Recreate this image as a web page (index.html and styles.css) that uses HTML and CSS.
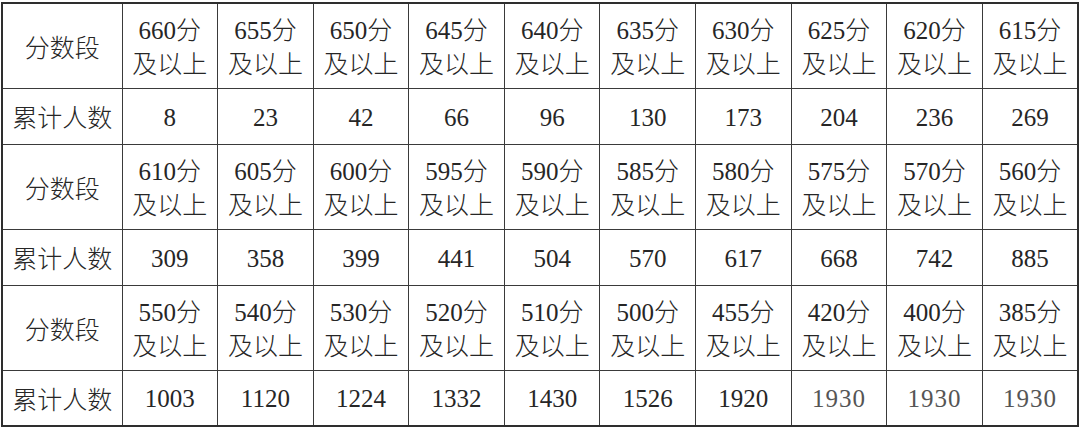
FILE: index.html
```html
<!DOCTYPE html>
<html lang="zh">
<head>
<meta charset="utf-8">
<title>分数段</title>
<link rel="stylesheet" href="styles.css">
</head>
<body>
<table class="score-table">
  <colgroup>
    <col class="col-head">
    <col class="col-data"><col class="col-data"><col class="col-data"><col class="col-data"><col class="col-data">
    <col class="col-data"><col class="col-data"><col class="col-data"><col class="col-data"><col class="col-data">
  </colgroup>
  <tbody>
    <tr class="row-score">
      <th>分数段</th>
      <td>660分<br>及以上</td><td>655分<br>及以上</td><td>650分<br>及以上</td><td>645分<br>及以上</td><td>640分<br>及以上</td>
      <td>635分<br>及以上</td><td>630分<br>及以上</td><td>625分<br>及以上</td><td>620分<br>及以上</td><td>615分<br>及以上</td>
    </tr>
    <tr class="row-count">
      <th>累计人数</th>
      <td>8</td><td>23</td><td>42</td><td>66</td><td>96</td><td>130</td><td>173</td><td>204</td><td>236</td><td>269</td>
    </tr>
    <tr class="row-score">
      <th>分数段</th>
      <td>610分<br>及以上</td><td>605分<br>及以上</td><td>600分<br>及以上</td><td>595分<br>及以上</td><td>590分<br>及以上</td>
      <td>585分<br>及以上</td><td>580分<br>及以上</td><td>575分<br>及以上</td><td>570分<br>及以上</td><td>560分<br>及以上</td>
    </tr>
    <tr class="row-count">
      <th>累计人数</th>
      <td>309</td><td>358</td><td>399</td><td>441</td><td>504</td><td>570</td><td>617</td><td>668</td><td>742</td><td>885</td>
    </tr>
    <tr class="row-score">
      <th>分数段</th>
      <td>550分<br>及以上</td><td>540分<br>及以上</td><td>530分<br>及以上</td><td>520分<br>及以上</td><td>510分<br>及以上</td>
      <td>500分<br>及以上</td><td>455分<br>及以上</td><td>420分<br>及以上</td><td>400分<br>及以上</td><td>385分<br>及以上</td>
    </tr>
    <tr class="row-count">
      <th>累计人数</th>
      <td>1003</td><td>1120</td><td>1224</td><td>1332</td><td>1430</td><td>1526</td><td>1920</td>
      <td class="faded">1930</td><td class="faded">1930</td><td class="faded">1930</td>
    </tr>
  </tbody>
</table>
</body>
</html>
```

FILE: styles.css
```css
html, body {
  margin: 0;
  padding: 0;
  background: #ffffff;
}

body {
  padding: 2px 0 0 1px;
}

.score-table {
  border-collapse: collapse;
  table-layout: fixed;
  width: 1077px;
  border: 2px solid #2e2e2e;
  font-family: "Liberation Serif", "Noto Sans CJK SC", serif;
  font-size: 25px;
  font-weight: 300;
  color: #262626;
}

.col-head {
  width: 120px;
}

.col-data {
  width: 95.6px;
}

.score-table th,
.score-table td {
  border: 1px solid #3a3a3a;
  text-align: center;
  vertical-align: middle;
  padding: 0;
  font-weight: 300;
  white-space: nowrap;
  overflow: hidden;
}

.row-score td {
  line-height: 34px;
  padding-top: 5px;
}

.row-count td {
  padding-top: 3px;
}

.row-score {
  height: 85px;
}

.row-count {
  height: 56px;
}

.faded {
  color: #555555;
  letter-spacing: 1px;
}
```
